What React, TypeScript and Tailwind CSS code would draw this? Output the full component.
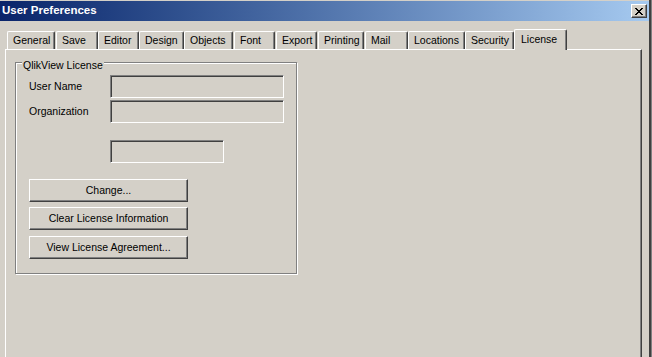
import React from 'react';

const tabs = [
  { label: 'General', w: 'w-[48px]', ml: 'ml-[7px]' },
  { label: 'Save', w: 'w-[42px]', ml: 'ml-[1px]' },
  { label: 'Editor', w: 'w-[41px]', ml: 'ml-[0px]' },
  { label: 'Design', w: 'w-[45px]', ml: 'ml-[0px]' },
  { label: 'Objects', w: 'w-[49px]', ml: 'ml-[0px]' },
  { label: 'Font', w: 'w-[41px]', ml: 'ml-[1px]' },
  { label: 'Export', w: 'w-[41px]', ml: 'ml-[1px]' },
  { label: 'Printing', w: 'w-[46px]', ml: 'ml-[1px]' },
  { label: 'Mail', w: 'w-[43px]', ml: 'ml-[1px]' },
  { label: 'Locations', w: 'w-[57px]', ml: 'ml-[0px]' },
  { label: 'Security', w: 'w-[49px]', ml: 'ml-[0px]' },
];

const Sunken: React.FC<{ className: string }> = ({ className }) => (
  <div
    className={`h-[23px] border border-t-[#808080] border-l-[#808080] border-b-white border-r-white shadow-[inset_1px_1px_0_#404040] ${className}`}
  />
);

const Button: React.FC<{ label: string; className?: string }> = ({ label, className = '' }) => (
  <button
    className={`w-[159px] h-[23px] flex items-center justify-center border border-t-white border-l-white border-b-[#404040] border-r-[#404040] shadow-[inset_-1px_-1px_0_#808080] text-black text-[10.5px] ${className}`}
  >
    {label}
  </button>
);

const App: React.FC = () => {
  return (
    <div
      className="w-[652px] h-[357px] bg-[#d4d0c8] flex overflow-hidden"
      style={{ fontFamily: '"Liberation Sans", Arial, sans-serif' }}
    >
      <div className="w-[649px] flex flex-col">
        {/* Title bar */}
        <div className="mt-[1px] h-[20px] bg-gradient-to-r from-[#0a246a] to-[#a6caf0] flex items-center justify-between pl-[2px] pr-[2px]">
          <span className="text-white font-bold text-[11.5px] leading-none">User Preferences</span>
          <div className="w-[16px] h-[14px] bg-[#d4d0c8] border border-t-white border-l-white border-b-[#404040] border-r-[#404040] shadow-[inset_-1px_-1px_0_#808080] flex items-center justify-center">
            <svg width="8" height="7" viewBox="0 0 8 7">
              <path d="M0 0 L7 7 M1 0 L8 7 M7 0 L0 7 M8 0 L1 7" stroke="#000" strokeWidth="1" fill="none" />
            </svg>
          </div>
        </div>

        {/* Tabs */}
        <div className="mt-[8px] h-[20px] flex items-end relative z-10">
          {tabs.map((t) => (
            <div
              key={t.label}
              className={`${t.w} ${t.ml} h-[18px] flex items-center pl-[5px] pt-[1px] border-t border-l border-t-white border-l-white border-r border-r-[#404040] shadow-[inset_-1px_0_0_#808080] rounded-tl-[2px] rounded-tr-[2px] text-[10.5px] text-black whitespace-nowrap`}
            >
              {t.label}
            </div>
          ))}
          <div className="w-[53px] h-[21px] -mb-[1px] bg-[#d4d0c8] flex items-center pl-[6px] pb-[1px] border-t border-l border-t-white border-l-white border-r border-r-[#404040] shadow-[inset_-1px_0_0_#808080] rounded-tl-[2px] rounded-tr-[2px] text-[10.5px] text-black">
            License
          </div>
        </div>

        {/* Panel */}
        <div className="ml-[5px] w-[637px] flex-1 border-t border-l border-t-white border-l-white border-r border-r-[#404040] shadow-[inset_-1px_0_0_#808080] pl-[9px] pt-[12px]">
          <div className="relative w-[282px] h-[212px] border border-[#808080] shadow-[inset_1px_1px_0_#fff,1px_1px_0_#fff] pt-[12px]">
            <span className="absolute left-[6px] -top-[4px] px-[1px] bg-[#d4d0c8] text-[10.5px] leading-[12px] text-black">
              QlikView License
            </span>

            <div className="flex items-center h-[23px]">
              <span className="w-[94px] pl-[13px] text-[10.5px] text-black">User Name</span>
              <Sunken className="w-[174px]" />
            </div>
            <div className="flex items-center h-[23px] mt-[2px]">
              <span className="w-[94px] pl-[13px] text-[10.5px] text-black">Organization</span>
              <Sunken className="w-[174px]" />
            </div>
            <div className="flex mt-[17px] pl-[94px]">
              <Sunken className="w-[114px]" />
            </div>

            <div className="flex flex-col pl-[13px] mt-[16px]">
              <Button label="Change..." />
              <Button label="Clear License Information" className="mt-[5px]" />
              <Button label="View License Agreement..." className="mt-[6px]" />
            </div>
          </div>
        </div>
      </div>
      <div className="w-[2px] bg-[#404040]" />
      <div className="w-[1px] bg-[#808080]" />
    </div>
  );
};

export default App;
